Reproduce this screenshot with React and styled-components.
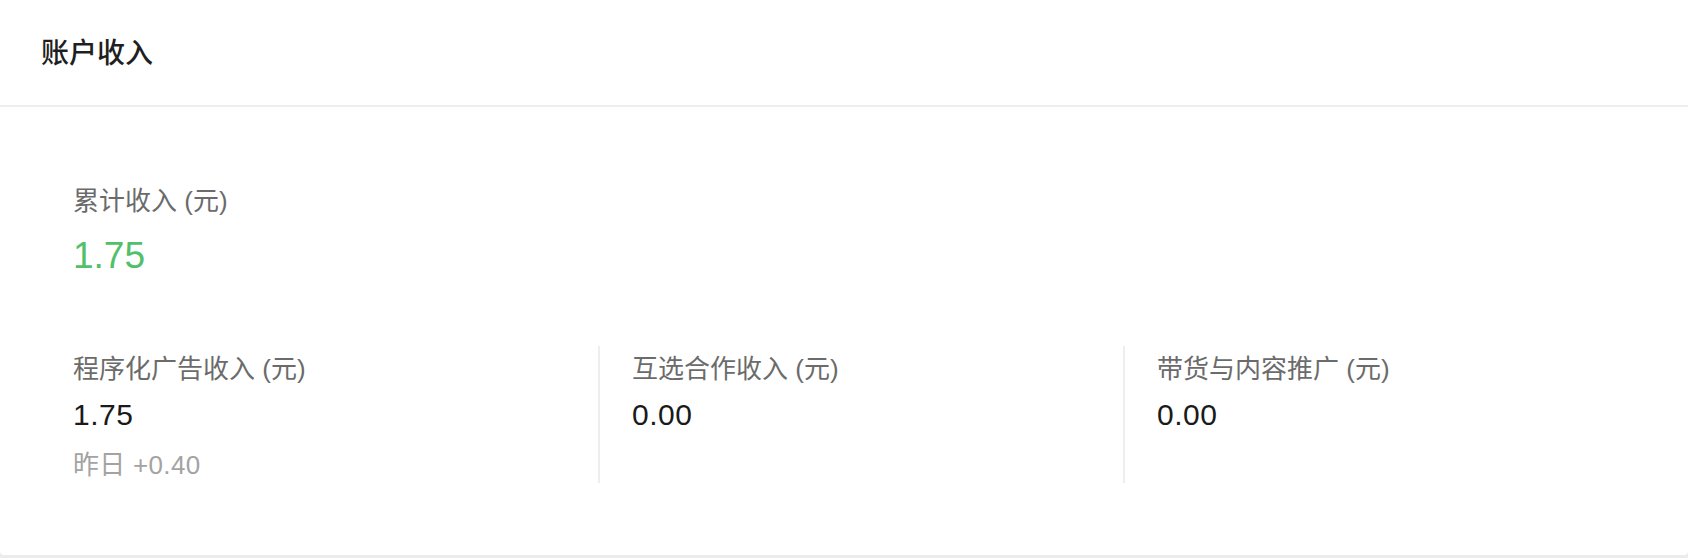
import React from "react"
import styled, { createGlobalStyle } from "styled-components"

const GlobalStyle = createGlobalStyle`
  html, body {
    margin: 0;
    padding: 0;
    background: #ececec;
  }
  body {
    font-family: "Liberation Sans", "Noto Sans CJK SC", sans-serif;
    -webkit-font-smoothing: antialiased;
  }
`

const Card = styled.section`
  width: 100%;
  height: 555px;
  background: #fff;
  border-radius: 0 0 4px 4px;
  display: flex;
  flex-direction: column;
`

const Header = styled.header`
  height: 107px;
  padding-left: 41px;
  display: flex;
  align-items: center;
  border-bottom: 2px solid #eeeeee;
  box-sizing: border-box;
  flex-shrink: 0;
  h2 {
    margin: 0;
    margin-top: -4px;
    font-size: 28px;
    font-weight: 500;
    color: #1f1f1f;
  }
`

const Body = styled.div`
  padding: 76px 40px 0 73px;
`

const Total = styled.div`
  display: flex;
  flex-direction: column;
  gap: 13px;
`

const Label = styled.p`
  margin: 0;
  font-size: 26px;
  line-height: 36px;
  color: #6b6b6b;
`

const BigValue = styled.p`
  margin: 0;
  font-size: 37px;
  line-height: 48px;
  color: #52bf6b;
`

const Breakdown = styled.div`
  display: grid;
  grid-template-columns: repeat(3, 1fr);
  margin-top: 66px;
`

const Column = styled.div`
  padding-top: 5px;
  padding-left: ${p => (p.first ? "0" : "32px")};
  border-left: ${p => (p.first ? "none" : "2px solid #eeeeee")};
  display: flex;
  flex-direction: column;
`

const Value = styled.p`
  margin: 8px 0 0;
  font-size: 30px;
  line-height: 40px;
  letter-spacing: 0.5px;
  color: #1a1a1a;
`

const Delta = styled.p`
  margin: 12px 0 0;
  font-size: 26px;
  line-height: 36px;
  letter-spacing: 0.3px;
  color: #a3a3a3;
`

const items = [
  { label: "程序化广告收入 (元)", value: "1.75", delta: "昨日 +0.40" },
  { label: "互选合作收入 (元)", value: "0.00" },
  { label: "带货与内容推广 (元)", value: "0.00" },
]

export default function App() {
  return (
    <>
      <GlobalStyle />
      <Card>
        <Header>
          <h2>账户收入</h2>
        </Header>
        <Body>
          <Total>
            <Label>累计收入 (元)</Label>
            <BigValue>1.75</BigValue>
          </Total>
          <Breakdown>
            {items.map((item, i) => (
              <Column key={item.label} first={i === 0}>
                <Label>{item.label}</Label>
                <Value>{item.value}</Value>
                {item.delta && <Delta>{item.delta}</Delta>}
              </Column>
            ))}
          </Breakdown>
        </Body>
      </Card>
    </>
  )
}
